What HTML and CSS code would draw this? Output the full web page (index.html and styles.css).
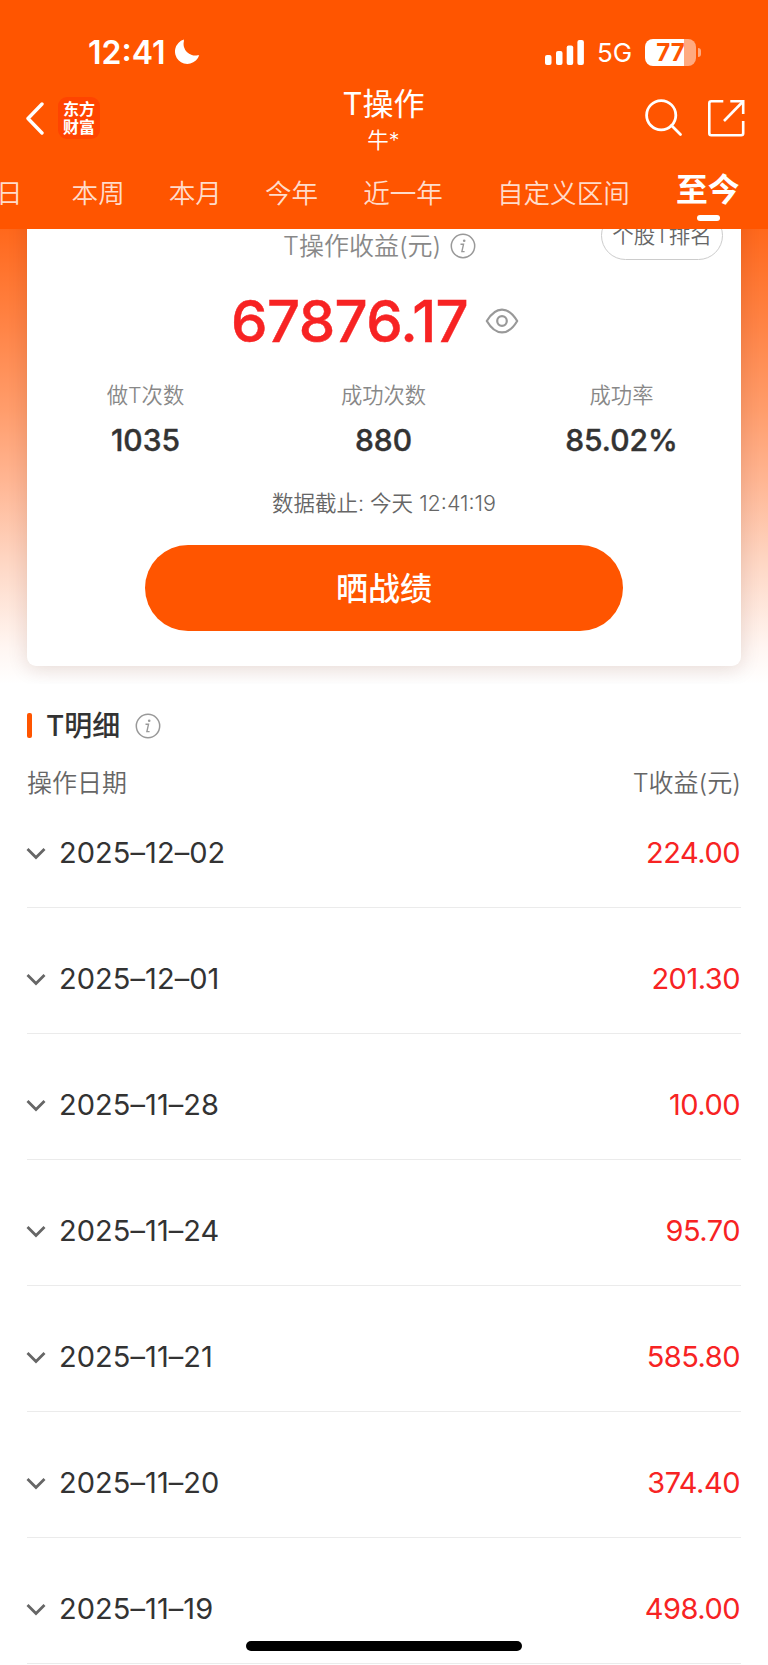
FILE: index.html
```html
<!DOCTYPE html>
<html lang="zh-CN">
  <head>
    <meta charset="UTF-8" />
    <meta name="viewport" content="width=device-width, initial-scale=1.0" />
    <title>T操作</title>
    <link rel="stylesheet" href="styles.css">
  </head>
  <body>
    <header>
      <div class="status">
        <span class="time">12:41</span>
        <svg class="moon" width="26" height="26" viewBox="0 0 26 26">
          <path d="M9.8 0.6 A12.4 12.4 0 1 0 25.2 16.2 A6 6 0 0 0 23.6 16.3 A11.6 11.6 0 0 1 9.9 2.2 Z" fill="#fff" />
        </svg>
        <svg class="signal" width="39" height="25" viewBox="0 0 39 25" fill="#fff">
          <rect x="0" y="15" width="6.5" height="10" rx="2" />
          <rect x="11" y="11" width="6.5" height="14" rx="2" />
          <rect x="21.7" y="5.5" width="6.5" height="19.5" rx="2" />
          <rect x="32.4" y="0" width="6.5" height="25" rx="2" />
        </svg>
        <span class="network">5G</span>
        <div class="battery"><span>77</span></div>
        <i class="nub"></i>
      </div>
      <div class="nav">
        <div class="nav-left">
          <svg width="20" height="34" viewBox="0 0 20 34" fill="none" stroke="#fff" stroke-width="3.4" stroke-linecap="round" stroke-linejoin="round">
            <path d="M17 3 L3 17.5 L17 32" />
          </svg>
          <div class="logo">东方<br />财富</div>
        </div>
        <div class="title">
          <h1>T操作</h1>
          <p>牛*</p>
        </div>
        <div class="nav-right">
          <svg width="38" height="38" viewBox="0 0 38 38" fill="none" stroke="#fff" stroke-width="2.8" stroke-linecap="round">
            <circle cx="16.2" cy="16.2" r="14.6" />
            <path d="M26.5 26.5 L35.5 35.5" />
          </svg>
          <svg width="38" height="38" viewBox="0 0 38 38" fill="none" stroke="#fff" stroke-width="2.6" stroke-linejoin="round">
            <path d="M16.3 2.3 H4.3 Q2.3 2.3 2.3 4.3 V34.2 Q2.3 36.2 4.3 36.2 H34.2 Q36.2 36.2 36.2 34.2 V22" />
            <path d="M23.3 2.3 H36.2 V15" stroke-linejoin="miter" />
            <path d="M35.5 3 L17 22" />
          </svg>
        </div>
      </div>
      <div class="tabs">
        <span class="tab day">日</span>
        <span class="tab week">本周</span>
        <span class="tab month">本月</span>
        <span class="tab year">今年</span>
        <span class="tab last-year">近一年</span>
        <span class="tab custom">自定义区间</span>
        <span class="tab active">至今</span>
      </div>
    </header>

    <main>
      <section class="hero">
        <div class="card">
          <div class="rank">个股T排名</div>
          <div class="label">
            <span>T操作收益(元)</span>
            <svg class="info" width="26" height="26" viewBox="0 0 26 26">
              <circle cx="13" cy="13" r="11.7" fill="none" stroke="#999" stroke-width="1.5" />
              <circle cx="14.2" cy="7.8" r="1.3" fill="#999" />
              <path d="M10.5 11.3 H13.5 L11.9 18.6 H14.6" fill="none" stroke="#999" stroke-width="1.4" />
            </svg>
          </div>
          <div class="total">
            <span>67876.17</span>
            <svg width="34" height="28" viewBox="0 0 34 28" fill="none" stroke="#999" stroke-width="2.2">
              <path d="M1.8 14 Q8.5 2.6 17 2.6 T32.2 14 Q25.5 25.4 17 25.4 T1.8 14 Z" stroke-linejoin="round" />
              <circle cx="17" cy="14" r="4.8" />
            </svg>
          </div>
          <div class="stats">
            <div class="stat"><p>做T次数</p><b>1035</b></div>
            <div class="stat"><p>成功次数</p><b>880</b></div>
            <div class="stat"><p>成功率</p><b>85.02%</b></div>
          </div>
          <div class="deadline">数据截止: 今天 12:41:19</div>
          <button class="share">晒战绩</button>
        </div>
      </section>

      <section class="detail">
        <div class="detail-title">
          <i class="mark"></i>
          <h2>T明细</h2>
          <svg class="info" width="26" height="26" viewBox="0 0 26 26">
            <circle cx="13" cy="13" r="11.7" fill="none" stroke="#999" stroke-width="1.5" />
            <circle cx="14.2" cy="7.8" r="1.3" fill="#999" />
            <path d="M10.5 11.3 H13.5 L11.9 18.6 H14.6" fill="none" stroke="#999" stroke-width="1.4" />
          </svg>
        </div>
        <div class="thead">
          <span>操作日期</span>
          <span>T收益(元)</span>
        </div>
        <ul class="list">
          <li><svg class="arrow" viewBox="0 0 20 14"><path d="M1.5 2 L10 10.5 L18.5 2" /></svg><span class="date">2025–12–02</span><span class="money">224.00</span></li>
          <li><svg class="arrow" viewBox="0 0 20 14"><path d="M1.5 2 L10 10.5 L18.5 2" /></svg><span class="date">2025–12–01</span><span class="money">201.30</span></li>
          <li><svg class="arrow" viewBox="0 0 20 14"><path d="M1.5 2 L10 10.5 L18.5 2" /></svg><span class="date">2025–11–28</span><span class="money">10.00</span></li>
          <li><svg class="arrow" viewBox="0 0 20 14"><path d="M1.5 2 L10 10.5 L18.5 2" /></svg><span class="date">2025–11–24</span><span class="money">95.70</span></li>
          <li><svg class="arrow" viewBox="0 0 20 14"><path d="M1.5 2 L10 10.5 L18.5 2" /></svg><span class="date">2025–11–21</span><span class="money">585.80</span></li>
          <li><svg class="arrow" viewBox="0 0 20 14"><path d="M1.5 2 L10 10.5 L18.5 2" /></svg><span class="date">2025–11–20</span><span class="money">374.40</span></li>
          <li><svg class="arrow" viewBox="0 0 20 14"><path d="M1.5 2 L10 10.5 L18.5 2" /></svg><span class="date">2025–11–19</span><span class="money">498.00</span></li>
        </ul>
      </section>
    </main>
    <div class="home-bar"></div>
  </body>
</html>
```
FILE: styles.css
```css
* {
  margin: 0;
  padding: 0;
  box-sizing: border-box;
}

body {
  width: 768px;
  height: 1665px;
  overflow: hidden;
  position: relative;
  background-color: #fff;
  font-family: Inter, "Noto Sans CJK SC", sans-serif;
  color: #333;
}

svg {
  display: block;
  flex-shrink: 0;
}

header {
  height: 229px;
  background-color: #ff5500;
  color: #fff;
  overflow: hidden;
}

/* status bar */
.status {
  display: flex;
  align-items: center;
  height: 64px;
  margin-top: 20px;
  padding-left: 88px;
}

.time {
  width: 86px;
  font-size: 32px;
  font-weight: 600;
}

.signal {
  margin-left: 345px;
}

.network {
  width: 48px;
  margin-left: 13px;
  font-size: 26px;
  font-weight: 400;
}

.battery {
  width: 51px;
  height: 27px;
  border-radius: 8px;
  background: linear-gradient(to right, #fff 39px, #ffaa80 39px);
  color: #ff5500;
  text-align: center;
  font-size: 24px;
  line-height: 27px;
  font-weight: 700;
}

.nub {
  width: 3px;
  height: 9px;
  margin-left: 2px;
  border-radius: 0 4px 4px 0;
  background-color: #ffaa80;
}

/* title bar */
.nav {
  display: flex;
  justify-content: space-between;
  height: 72px;
  padding: 0 23px 0 25px;
}

.nav-left,
.nav-right {
  display: flex;
  align-items: center;
  width: 160px;
  height: 68px;
}

.logo {
  width: 42px;
  height: 42px;
  margin-left: 13px;
  padding-top: 4px;
  border-radius: 9px;
  background-color: #ff4400;
  font-size: 16px;
  line-height: 17.5px;
  font-weight: 700;
  text-align: center;
}

.title {
  margin-left: -3px;
  text-align: center;
}

.title h1 {
  font-size: 31px;
  line-height: 40px;
  font-weight: 400;
}

.title p {
  font-size: 21.5px;
  line-height: 32px;
  font-weight: 350;
}

.nav-right {
  justify-content: flex-end;
  gap: 24px;
}

.tabs {
  display: flex;
  height: 73px;
  line-height: 75px;
  font-size: 26.6px;
  font-weight: 350;
  white-space: nowrap;
}

.tab {
  color: #ffdccb;
}

.day {
  margin-left: -4px;
}

.week {
  margin-left: 49px;
}

.month {
  margin-left: 44px;
}

.year {
  margin-left: 43px;
}

.last-year {
  margin-left: 45px;
}

.custom {
  margin-left: 54px;
}

.active {
  position: relative;
  margin-left: 46px;
  line-height: 67px;
  font-size: 31.8px;
  font-weight: 700;
  color: #fff;
}

.active::after {
  content: "";
  position: absolute;
  left: 21px;
  top: 59px;
  width: 23px;
  height: 6px;
  border-radius: 3px;
  background-color: #fff;
}

/* profit card */
.hero {
  height: 455px;
  padding: 0 27px;
  overflow: hidden;
  background: linear-gradient(#ff681c, #ff8243 20%, #ff9d6c 40%, #ffb592 55%, #fed6c3 73%, #fff6f2 92%, #fff);
}

.card {
  position: relative;
  height: 467px;
  margin-top: -30px;
  padding-top: 30px;
  border-radius: 9px;
  background-color: #fff;
  box-shadow: 0 3px 20px rgba(70, 20, 0, 0.14);
}

.rank {
  position: absolute;
  right: 18px;
  top: 12px;
  width: 122px;
  height: 49px;
  border: 1px solid #ccc;
  border-radius: 25px;
  font-size: 21.5px;
  line-height: 46px;
  text-align: center;
  color: #666;
  font-weight: 350;
}

.label {
  display: flex;
  align-items: center;
  height: 34px;
  padding-left: 256px;
  font-size: 25px;
  line-height: 30px;
  color: #888;
  font-weight: 350;
}

.label span {
  margin-top: -1px;
}

.label .info {
  margin-left: 9px;
}

.total {
  display: flex;
  align-items: center;
  height: 116px;
  padding-left: 204px;
  font-size: 58px;
  font-weight: 500;
  letter-spacing: -0.6px;
  color: #f72323;
  -webkit-text-stroke: 0.5px #f72323;
}

.total span {
  width: 254px;
}

.stats {
  display: flex;
}

.stat {
  flex: 1;
  text-align: center;
}

.stat p {
  margin-left: -1px;
  font-size: 21.3px;
  line-height: 32px;
  color: #888;
  font-weight: 350;
}

.stat b {
  display: block;
  margin-left: -1px;
  font-size: 30px;
  line-height: 58px;
  font-weight: 500;
  -webkit-text-stroke: 0.4px #333;
}

.deadline {
  margin-top: 18px;
  font-size: 21.5px;
  line-height: 32px;
  text-align: center;
  color: #666;
  font-weight: 350;
}

.share {
  display: block;
  width: 478px;
  height: 86px;
  margin: 26px auto 0;
  padding-bottom: 5px;
  border: none;
  border-radius: 43px;
  background-color: #ff5500;
  color: #fff;
  font-family: inherit;
  font-size: 32px;
  font-weight: 500;
}

/* detail list */
.detail {
  padding: 0 27px;
}

.detail-title {
  display: flex;
  align-items: center;
  height: 83px;
}

.mark {
  width: 5px;
  height: 25px;
  border-radius: 2px;
  background-color: #ff5500;
}

.detail-title h2 {
  margin: -4px 15px 0 14px;
  font-size: 28px;
  font-weight: 500;
}

.thead {
  display: flex;
  justify-content: space-between;
  height: 33px;
  line-height: 33px;
  font-size: 25px;
  color: #666;
  font-weight: 350;
}

.list {
  list-style: none;
}

.list li {
  display: flex;
  align-items: center;
  height: 126px;
  padding-top: 16px;
  border-bottom: 1px solid #ebebeb;
  font-size: 29px;
  font-weight: 400;
}

.list li:first-child {
  height: 108px;
  padding-top: 0;
  padding-bottom: 2px;
}

.arrow {
  width: 20px;
  height: 14px;
  margin-left: -1px;
  margin-top: 2px;
  fill: none;
  stroke: #666;
  stroke-width: 2.8;
}

.date {
  margin-left: 13px;
  letter-spacing: 0.05px;
}

.money {
  margin-left: auto;
  margin-right: 1px;
  letter-spacing: -0.5px;
  color: #f72323;
}

.home-bar {
  position: absolute;
  left: 246px;
  bottom: 14px;
  width: 276px;
  height: 10px;
  border-radius: 5px;
  background-color: #000;
}
```
